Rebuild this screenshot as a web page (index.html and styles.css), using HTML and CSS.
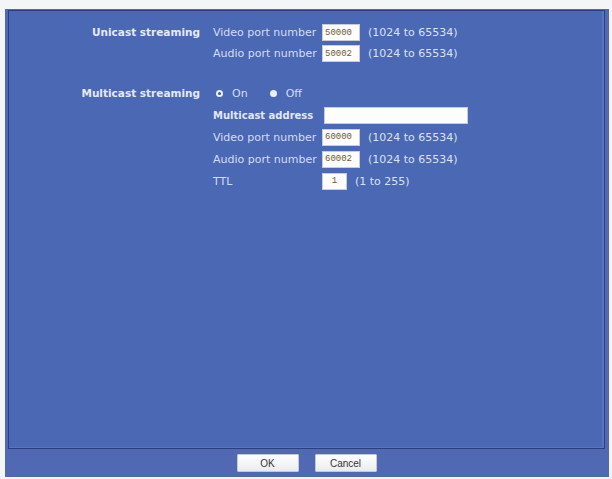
FILE: index.html
```html
<!DOCTYPE html>
<html lang="en">
<head>
    <meta charset="UTF-8">
    <title>Streaming</title>
    <link rel="stylesheet" href="styles.css">
</head>
<body>
    <div class="window">
        <div class="panel">
            <!-- Unicast -->
            <div class="section unicast">
                <div class="section-label">Unicast streaming</div>
                <div class="fields">
                    <div class="row">
                        <span class="field-label">Video port number</span>
                        <input class="port" type="text" value="50000">
                        <span class="range">(1024 to 65534)</span>
                    </div>
                    <div class="row">
                        <span class="field-label">Audio port number</span>
                        <input class="port" type="text" value="50002">
                        <span class="range">(1024 to 65534)</span>
                    </div>
                </div>
            </div>

            <!-- Multicast -->
            <div class="section multicast">
                <div class="section-label">Multicast streaming</div>
                <div class="fields">
                    <div class="row radios">
                        <span class="radio ring"></span><span class="radio-text">On</span>
                        <span class="radio dot"></span><span class="radio-text">Off</span>
                    </div>
                    <div class="row">
                        <span class="field-label bold">Multicast address</span>
                        <input class="address" type="text" value="">
                    </div>
                    <div class="row">
                        <span class="field-label">Video port number</span>
                        <input class="port" type="text" value="60000">
                        <span class="range">(1024 to 65534)</span>
                    </div>
                    <div class="row">
                        <span class="field-label">Audio port number</span>
                        <input class="port" type="text" value="60002">
                        <span class="range">(1024 to 65534)</span>
                    </div>
                    <div class="row">
                        <span class="field-label">TTL</span>
                        <input class="ttl" type="text" value="1">
                        <span class="range">(1 to 255)</span>
                    </div>
                </div>
            </div>
        </div>

        <div class="button-bar">
            <button>OK</button>
            <button>Cancel</button>
        </div>
    </div>
</body>
</html>
```

FILE: styles.css
```css
/* pagina base */
body, html {
    margin: 0;
    padding: 0;
    height: 100%;
    background-color: #f3f5f7;
    font-family: "DejaVu Sans", Verdana, sans-serif;
}

body {
    padding: 9px 3px 2px 5px;
    box-sizing: border-box;
}

/* marco azul de la ventana */
.window {
    height: 100%;
    background-color: #5069b2;
    padding: 1px 4px 0 3px;
    box-sizing: border-box;
    display: flex;
    flex-direction: column;
}

.panel {
    flex: 1;
    background-color: #4b68b5;
    border: 1px solid #2c3d80;
    box-shadow: inset -2px -1px 0 #5d74bb;
    padding-top: 11px;
}

.section {
    display: flex;
    align-items: flex-start;
}

.multicast {
    margin-top: 18px;
}

.section-label {
    width: 191px;
    text-align: right;
    font-size: 10.5px;
    font-weight: bold;
    color: #e6e9f4;
    line-height: 21px;
    padding-right: 13px;
    flex-shrink: 0;
}

.multicast .section-label {
    line-height: 22px;
}

.fields {
    display: flex;
    flex-direction: column;
}

.row {
    display: flex;
    align-items: center;
    height: 21px;
    font-size: 11px;
    color: #d6dcf0;
}

.multicast .row {
    height: 22px;
}

.field-label {
    width: 109px;
    flex-shrink: 0;
    white-space: nowrap;
}

.field-label.bold {
    font-weight: bold;
    font-size: 10px;
    color: #e3e7f4;
}

input {
    box-sizing: border-box;
    height: 17px;
    border: 1px solid #c9ccd6;
    background-color: #fdfdfb;
    font-family: "Liberation Mono", "DejaVu Sans Mono", monospace;
    font-size: 9px;
    color: #6d5a2e;
    padding: 0 2px;
    margin: 0;
}

.port {
    width: 38px;
}

.address {
    width: 144px;
    margin-left: 2px;
}

.ttl {
    width: 25px;
    text-align: center;
}

.range {
    margin-left: 8px;
    color: #dbe0f2;
}

/* radios On / Off */
.radios {
    padding-left: 3px;
}

.radio {
    width: 7px;
    height: 7px;
    border-radius: 50%;
    box-sizing: border-box;
    flex-shrink: 0;
}

.radio.ring {
    border: 2px solid #eef0f8;
    background-color: #3d58a2;
}

.radio.dot {
    background-color: #eef0f8;
    margin-left: 22px;
}

.radio-text {
    margin-left: 9px;
}

/* barra inferior con botones */
.button-bar {
    height: 28px;
    display: flex;
    justify-content: center;
    align-items: center;
    gap: 16px;
}

.button-bar button {
    width: 62px;
    height: 18px;
    padding: 0;
    font-family: "Liberation Sans", Arial, sans-serif;
    font-size: 10px;
    color: #333;
    background: linear-gradient(#ffffff, #e9ecef);
    border: 1px solid #c4c9d6;
    border-radius: 1px;
}
```
